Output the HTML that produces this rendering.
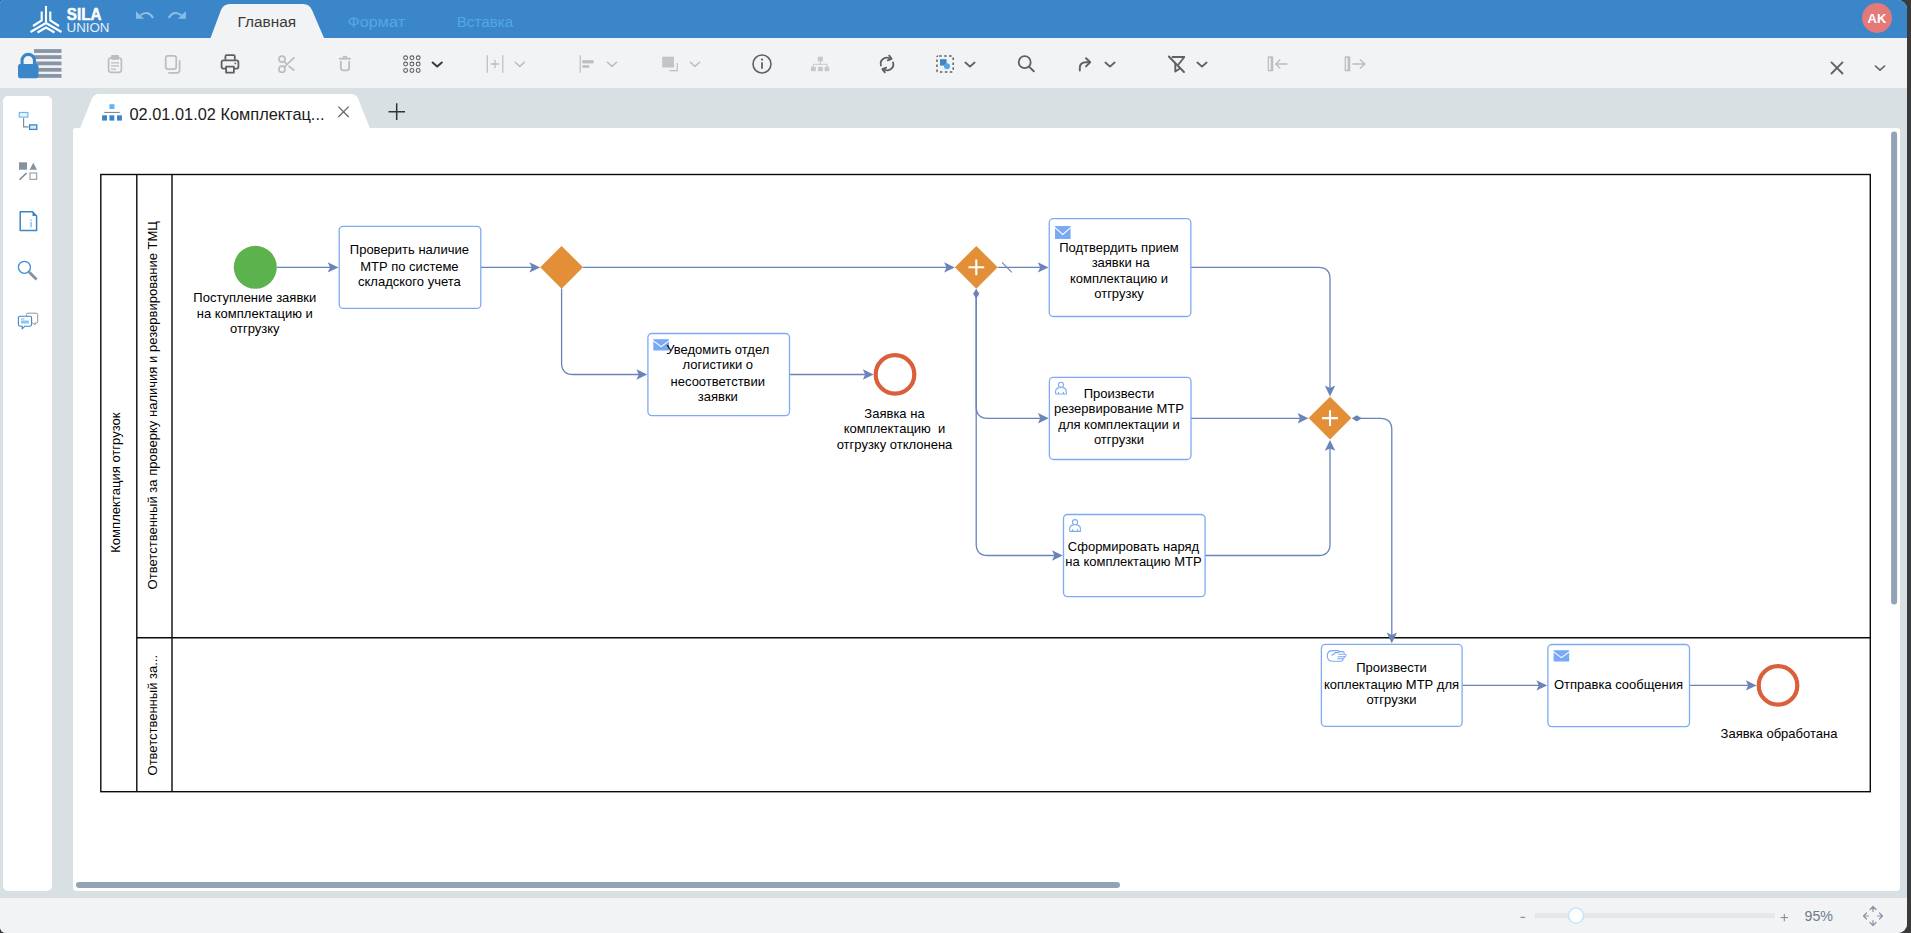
<!DOCTYPE html>
<html lang="ru">
<head>
<meta charset="utf-8">
<title>SILA Union</title>
<style>
html,body{margin:0;padding:0;}
body{width:1911px;height:933px;overflow:hidden;background:#3a3a3a;font-family:"Liberation Sans",sans-serif;position:relative;}
#app{position:absolute;left:0;top:0;width:1907px;height:933px;background:#d9e0e4;border-radius:3px 9px 9px 6px;overflow:hidden;}
#topbar{position:absolute;left:0;top:0;width:1907px;height:38px;background:#3b86c8;}
#toolbar{position:absolute;left:0;top:38px;width:1907px;height:50px;background:#f2f3f5;}
#statusbar{position:absolute;left:0;top:898px;width:1907px;height:35px;background:#f2f3f5;}
#sidebar{position:absolute;left:3px;top:96px;width:49px;height:795px;background:#fff;border-radius:5px;}
#canvas{position:absolute;left:73px;top:128px;width:1827px;height:763px;background:#fff;border-radius:3px 3px 4px 4px;}
svg{position:absolute;left:0;top:0;overflow:visible;}
svg text{font-family:"Liberation Sans",sans-serif;}
</style>
</head>
<body>
<div id="app">
<div id="topbar"></div>
<div id="toolbar"></div>
<div id="sidebar"></div>
<div id="canvas"></div>
<div id="statusbar"></div>
<svg id="chrome" width="1907" height="933" viewBox="0 0 1907 933">

<!-- ribbon active tab -->
<path d="M210.5 38 L221 10 Q223.5 4 230 4 L303 4 Q309.5 4 312 10 L324 38 Z" fill="#f2f3f5"/>
<text x="237.6" y="26.7" font-size="15.2" fill="#3a3a3a" textLength="58.5" lengthAdjust="spacingAndGlyphs">Главная</text>
<text x="347.4" y="26.9" font-size="15.2" fill="#52a7e6" textLength="57.7" lengthAdjust="spacingAndGlyphs">Формат</text>
<text x="456.7" y="26.9" font-size="15.2" fill="#52a7e6" textLength="56.5" lengthAdjust="spacingAndGlyphs">Вставка</text>
<!-- logo -->
<g stroke="#fff" stroke-width="2.1" fill="none" stroke-linecap="butt">
<path d="M46 6 V22.5"/><path d="M41.7 11.5 V20.5 L33 26"/><path d="M50.3 11.5 V20.5 L59 26"/>
<path d="M46 23 L30.5 32"/><path d="M46 23 L61.5 32"/>
<path d="M37.5 32.5 L46 27.5 L54.5 32.5"/>
</g>
<text x="66.8" y="19.9" font-size="15.6" font-weight="bold" fill="#fff" stroke="#fff" stroke-width="0.5" textLength="34.6" lengthAdjust="spacingAndGlyphs">SILA</text>
<text x="66.5" y="31.8" font-size="13" fill="#e6f0fa" textLength="43" lengthAdjust="spacingAndGlyphs">UNION</text>
<!-- undo redo -->
<g stroke="#86bee5" stroke-width="2.1" fill="none">
<path d="M140.5 15.3 Q147.5 9.5 153.2 18"/><path d="M168.6 18 Q174.3 9.5 181.3 15.3"/>
</g>
<path d="M136 11.3 L136 18.8 L144 18.8 Z" fill="#86bee5"/><path d="M185.8 11.3 L185.8 18.8 L177.8 18.8 Z" fill="#86bee5"/>
<!-- avatar -->
<circle cx="1877" cy="18" r="15" fill="#e57878"/>
<text x="1877" y="23" font-size="13" font-weight="bold" fill="#fff" text-anchor="middle">AK</text>
<rect x="34" y="49.1" width="27.5" height="3.8" fill="#8795a6"/>
<rect x="34" y="55.2" width="27.5" height="3.8" fill="#8795a6"/>
<rect x="34" y="61.5" width="27.5" height="3.8" fill="#8795a6"/>
<rect x="34" y="67.9" width="27.5" height="3.8" fill="#8795a6"/>
<rect x="34" y="74.0" width="27.5" height="3.8" fill="#8795a6"/>
<path d="M22.05 66 V60.6 A6.2 6.2 0 0 1 34.45 60.6 V66" stroke="#3b86c8" stroke-width="3.1" fill="none"/>
<rect x="18" y="64" width="20.5" height="14.3" rx="2.2" fill="#3b86c8"/>
<g stroke="#bdbdbd" fill="none" stroke-width="1.7"><rect x="108.6" y="58" width="12.8" height="14.3" rx="2.2"/><path d="M111 62.8 H119 M111 65.9 H119 M111 69.2 H116" stroke-width="1.3"/></g><rect x="111" y="55.1" width="8" height="4.7" rx="0.8" fill="#bdbdbd"/>
<g stroke="#bdbdbd" fill="none" stroke-width="1.7"><rect x="165.7" y="55.9" width="10.5" height="13.3" rx="2.2"/><path d="M168.3 72.8 H177 Q179.6 72.8 179.6 70.2 V60.2"/></g>
<g stroke="#606060" fill="none" stroke-width="1.8" stroke-linejoin="round"><path d="M225.4 59.8 V56.4 Q225.4 55.2 226.6 55.2 H233.6 Q234.8 55.2 234.8 56.4 V59.8"/><path d="M226 68.6 H223.4 Q221.6 68.6 221.6 66.8 V62.2 Q221.6 60.4 223.4 60.4 H236.6 Q238.4 60.4 238.4 62.2 V66.8 Q238.4 68.6 236.6 68.6 H234"/><rect x="226.1" y="66.7" width="7.8" height="6"/></g><circle cx="235.3" cy="63.3" r="0.9" fill="#606060"/>
<g stroke="#bdbdbd" fill="none" stroke-width="1.7"><circle cx="282" cy="59.1" r="3.05"/><circle cx="282" cy="69.2" r="3.05"/><path d="M284.3 67 L294.4 57.4 M284.3 61.4 L286.8 64.2 M288.6 66 L294.4 70.5" stroke-linecap="butt"/></g>
<g stroke="#bdbdbd" fill="none" stroke-width="1.8"><path d="M339 58.7 H350.8"/><path d="M342.8 57.6 Q345 55.6 347.2 57.6" stroke-width="1.6"/><path d="M340.8 61 V67.6 Q340.8 70.4 343.4 70.4 H346.6 Q349.2 70.4 349.2 67.6 V61"/></g>
<circle cx="405.6" cy="57.8" r="1.95" stroke="#606060" stroke-width="1.05" fill="none"/><circle cx="405.6" cy="64.1" r="1.95" stroke="#606060" stroke-width="1.05" fill="none"/><circle cx="405.6" cy="70.4" r="1.95" stroke="#606060" stroke-width="1.05" fill="none"/><circle cx="411.9" cy="57.8" r="1.95" stroke="#606060" stroke-width="1.05" fill="none"/><circle cx="411.9" cy="64.1" r="1.95" stroke="#606060" stroke-width="1.05" fill="none"/><circle cx="411.9" cy="70.4" r="1.95" stroke="#606060" stroke-width="1.05" fill="none"/><circle cx="418.2" cy="57.8" r="1.95" stroke="#606060" stroke-width="1.05" fill="none"/><circle cx="418.2" cy="64.1" r="1.95" stroke="#606060" stroke-width="1.05" fill="none"/><circle cx="418.2" cy="70.4" r="1.95" stroke="#606060" stroke-width="1.05" fill="none"/>
<path d="M432.6 62.5 L437.2 66.6 L441.8 62.5" stroke="#3a3a3a" stroke-width="2" fill="none" stroke-linecap="round" stroke-linejoin="round"/>
<g stroke="#bdbdbd" stroke-width="1.2" fill="none"><path d="M487.3 55.2 V72.8 M502.8 55.2 V72.8"/><path d="M490.8 64 H499.2 M495 59.8 V68.2" stroke-width="1.3"/></g>
<path d="M515.2 62.3 L519.8 66.4 L524.4 62.3" stroke="#bdbdbd" stroke-width="1.5" fill="none" stroke-linecap="round" stroke-linejoin="round"/>
<path d="M580.2 55.2 V72.8" stroke="#bdbdbd" stroke-width="1.2"/><rect x="582.3" y="60.2" width="11.3" height="3.2" fill="#bdbdbd"/><rect x="582.3" y="65.2" width="7" height="2.6" fill="#bdbdbd"/>
<path d="M607.4 62.3 L612.0 66.4 L616.6 62.3" stroke="#bdbdbd" stroke-width="1.5" fill="none" stroke-linecap="round" stroke-linejoin="round"/>
<rect x="662.2" y="56.7" width="11.8" height="10.8" fill="#c4c4c4"/><path d="M669.5 70.6 H677.3 V63" stroke="#bdbdbd" stroke-width="1.1" fill="none"/>
<path d="M690.4 62.3 L695.0 66.4 L699.6 62.3" stroke="#bdbdbd" stroke-width="1.5" fill="none" stroke-linecap="round" stroke-linejoin="round"/>
<circle cx="762" cy="64" r="9" stroke="#606060" stroke-width="1.6" fill="none"/><rect x="761.1" y="62.3" width="1.8" height="6.5" fill="#606060"/><circle cx="762" cy="59.6" r="1.1" fill="#606060"/>
<g fill="#c8c8c8"><rect x="817.8" y="56.7" width="5" height="4.6"/><rect x="811" y="66.8" width="4.8" height="4.4"/><rect x="818" y="66.8" width="4.8" height="4.4"/><rect x="824.6" y="66.8" width="4.6" height="4.4"/></g><path d="M820.3 61 V64.3 M813.3 67 V64.3 H827 V67" stroke="#c8c8c8" stroke-width="1" fill="none"/>
<g stroke="#606060" stroke-width="1.8" fill="none" stroke-linecap="round" stroke-linejoin="round"><path d="M880.9 65.6 A6.2 6.2 0 0 1 890.6 59"/><path d="M889.2 55.6 L891.6 58.9 L887.8 60.4"/><path d="M893.1 62.4 A6.2 6.2 0 0 1 883.4 69"/><path d="M884.8 72.4 L882.4 69.1 L886.2 67.6"/></g>
<rect x="937" y="56" width="16.2" height="16" rx="1" stroke="#606060" stroke-width="1.5" stroke-dasharray="2.5 2.45" stroke-dashoffset="-1.2" fill="none"/><rect x="940" y="59.2" width="6.6" height="6.4" fill="#3b86c8"/><circle cx="947" cy="66.2" r="3" fill="#52a7e6"/>
<path d="M965.4 62.5 L970.0 66.6 L974.6 62.5" stroke="#606060" stroke-width="1.8" fill="none" stroke-linecap="round" stroke-linejoin="round"/>
<circle cx="1024.7" cy="62.2" r="6" stroke="#606060" stroke-width="1.8" fill="none"/><path d="M1029 66.6 L1033.8 71.2" stroke="#606060" stroke-width="2" stroke-linecap="round"/>
<g stroke="#606060" stroke-width="1.9" fill="none" stroke-linecap="round" stroke-linejoin="round"><path d="M1079.8 70.5 V68 Q1079.8 62.3 1086 62.3 H1089.5"/><path d="M1086 58.2 L1090.2 62.3 L1086 66.4"/></g>
<path d="M1105.4 62.5 L1110.0 66.6 L1114.6 62.5" stroke="#606060" stroke-width="1.8" fill="none" stroke-linecap="round" stroke-linejoin="round"/>
<g stroke="#606060" stroke-width="1.9" fill="none" stroke-linecap="round" stroke-linejoin="round"><path d="M1172.5 57 H1184.3 L1178.5 64.5 M1175.3 63.5 V71.5 L1179.5 68.8 V67.5"/><path d="M1168.8 56.5 L1184 72"/></g>
<path d="M1197.4 62.5 L1202.0 66.6 L1206.6 62.5" stroke="#606060" stroke-width="1.8" fill="none" stroke-linecap="round" stroke-linejoin="round"/>
<g stroke="#bdbdbd" stroke-width="1.3" fill="none"><rect x="1268.3" y="57.2" width="3" height="13.2"/><path d="M1268.3 57.2 H1272.6 V70.6 H1268.3" /><path d="M1275.5 64 H1287.5 M1280.3 59.6 L1275.8 64 L1280.3 68.4" stroke-width="1.4"/></g>
<g stroke="#bdbdbd" stroke-width="1.3" fill="none"><rect x="1345.3" y="57.2" width="3" height="13.2"/><path d="M1345.3 57.2 H1349.6 V70.6 H1345.3" /><path d="M1352.5 64 H1364.8 M1360 59.6 L1364.8 64 L1360 68.4" stroke-width="1.4"/></g>
<path d="M1831 61.8 L1843 74 M1843 61.8 L1831 74" stroke="#606060" stroke-width="1.8" fill="none"/>
<path d="M1875.4 66.0 L1880.0 70.1 L1884.6 66.0" stroke="#606060" stroke-width="1.6" fill="none" stroke-linecap="round" stroke-linejoin="round"/>
<path d="M80 128.5 L92 98.5 Q94 94 99 94 L351 94 Q356 94 358 98.5 L370 128.5 Z" fill="#fff"/>
<rect x="109.4" y="104.2" width="5.1" height="4.8" fill="#64b5f4"/><rect x="104.3" y="111.9" width="15.4" height="1.1" fill="#7a8a9a"/><rect x="102.1" y="115.3" width="4.9" height="5.3" fill="#3b86c8"/><rect x="109.4" y="115.3" width="4.9" height="5.3" fill="#3b86c8"/><rect x="117" y="115.3" width="4.9" height="5.3" fill="#3b86c8"/>
<text x="129.5" y="120" font-size="16.2" fill="#1c1c1c" textLength="195" lengthAdjust="spacingAndGlyphs">02.01.01.02 Комплектац...</text>
<path d="M338.3 106.6 L348.7 117 M348.7 106.6 L338.3 117" stroke="#666" stroke-width="1.3" fill="none"/>
<path d="M388.5 111.7 H405 M396.7 103.3 V120" stroke="#333" stroke-width="1.5" fill="none"/>
<rect x="19.3" y="112.5" width="8.6" height="4.6" stroke="#6cb8f0" stroke-width="1.2" fill="#e8f4fd"/><path d="M23.6 118 V126.9 H28.5" stroke="#7a8794" stroke-width="1.1" fill="none"/><rect x="29.6" y="124.9" width="7.2" height="4.5" stroke="#3b86c8" stroke-width="1.3" fill="#dcebf8"/>
<rect x="19" y="162.3" width="8" height="7.4" fill="#8592a0"/><path d="M33.3 162.8 L37 169.7 H29.6 Z" fill="#8592a0"/><path d="M19.5 179.7 L26.6 173" stroke="#6d7986" stroke-width="1.2"/><rect x="30" y="173" width="6.6" height="6.4" stroke="#98a3ae" stroke-width="1.2" fill="none"/>
<path d="M20.2 211.8 H32.5 L36.6 216 V230.4 H20.2 Z" stroke="#3b86c8" stroke-width="1.5" fill="none" stroke-linejoin="round"/><path d="M32.5 211.8 V216 H36.6 Z" fill="#3b86c8"/><rect x="30.4" y="222" width="1.3" height="5.2" fill="#6cb8f0"/><rect x="30.4" y="219.6" width="1.3" height="1.4" fill="#6cb8f0"/>
<circle cx="24.4" cy="267.3" r="6" stroke="#3b8ed6" stroke-width="1.3" fill="none"/><path d="M28.8 271.7 L36.6 279.4" stroke="#8592a0" stroke-width="2.8"/>
<path d="M26.5 315.8 V314.6 Q26.5 313.2 28 313.2 H36.2 Q37.7 313.2 37.7 314.6 V321.5 Q37.7 323 36.2 323 H35 V325 L33 323 H32.3" stroke="#8a96a3" stroke-width="1" fill="none"/><path d="M20 316.3 H30 Q31.6 316.3 31.6 317.9 V324.6 Q31.6 326.2 30 326.2 H25 L22.3 328.8 V326.2 H20 Q18.4 326.2 18.4 324.6 V317.9 Q18.4 316.3 20 316.3 Z" stroke="#3b86c8" stroke-width="1.1" fill="#fff"/><path d="M21 319 H24.5" stroke="#6cb8f0" stroke-width="1"/><rect x="21" y="320.5" width="7.8" height="3" fill="#8cc4ee"/>
<rect x="76" y="882" width="1044" height="6" rx="3" fill="#93a3b5"/>
<rect x="1891.1" y="131.5" width="6" height="473" rx="3" fill="#93a3b5"/>
<rect x="1520.5" y="916.8" width="4.6" height="1.1" fill="#7a8795"/>
<rect x="1535" y="913" width="240" height="5.2" fill="#e6e7e9"/>
<circle cx="1576" cy="915.6" r="7.6" fill="#fff" stroke="#c4e6f8" stroke-width="1.6"/>
<path d="M1780.6 917.6 H1788 M1784.3 913.9 V921.3" stroke="#7a8795" stroke-width="1" fill="none"/>
<text x="1804.5" y="921.2" font-size="15" fill="#6f7c8a" textLength="28.5" lengthAdjust="spacingAndGlyphs">95%</text>
<g stroke="#8795a6" stroke-width="1.2" fill="none" stroke-linecap="round" stroke-linejoin="round"><path d="M1873 906.5 V911.5 M1870 909.5 L1873 906.5 L1876 909.5"/><path d="M1873 925.5 V920.5 M1870 922.5 L1873 925.5 L1876 922.5"/><path d="M1863.5 916 H1868.5 M1866.5 913 L1863.5 916 L1866.5 919"/><path d="M1882.5 916 H1877.5 M1879.5 913 L1882.5 916 L1879.5 919"/></g>

</svg>
<svg id="diagram" width="1907" height="933" viewBox="0 0 1907 933">
<g stroke="#0a0a0a" stroke-width="1.4" fill="none"><rect x="100.8" y="174.5" width="1769.5" height="617.2"/><path d="M136.8 174.5 V791.7 M172 174.5 V791.7 M136.8 637.7 H1870.3"/></g>
<text transform="translate(120.3 482.6) rotate(-90)" x="-70.15" font-size="13" fill="#000" textLength="140.3" lengthAdjust="spacing">Комплектация отгрузок</text>
<text transform="translate(156.5 405.2) rotate(-90)" x="-184.2" font-size="13" fill="#000" textLength="368.4" lengthAdjust="spacing">Ответственный за проверку наличия и резервирование ТМЦ</text>
<text transform="translate(156.5 715.2) rotate(-90)" x="-60.3" font-size="13" fill="#000" textLength="120.6" lengthAdjust="spacing">Ответственный за...</text>
<path d="M276.8 267.4 H331" stroke="#6a83b9" stroke-width="1.3" fill="none"/><path transform="translate(338.5 267.4) rotate(0)" d="M0 0 L-10.8 -5.2 L-8.4 0 L-10.8 5.2 Z" fill="#6a83b9" stroke="none"/>
<path d="M480.8 267.4 H532" stroke="#6a83b9" stroke-width="1.3" fill="none"/><path transform="translate(540.2 267.4) rotate(0)" d="M0 0 L-10.8 -5.2 L-8.4 0 L-10.8 5.2 Z" fill="#6a83b9" stroke="none"/>
<path d="M583 267.4 H947" stroke="#6a83b9" stroke-width="1.3" fill="none"/><path transform="translate(954.9 267.4) rotate(0)" d="M0 0 L-10.8 -5.2 L-8.4 0 L-10.8 5.2 Z" fill="#6a83b9" stroke="none"/>
<path d="M561.6 288.6 V363.0 Q561.6 374.5 573.1 374.5 H640" stroke="#6a83b9" stroke-width="1.3" fill="none"/><path transform="translate(647.2 374.5) rotate(0)" d="M0 0 L-10.8 -5.2 L-8.4 0 L-10.8 5.2 Z" fill="#6a83b9" stroke="none"/>
<path d="M789.5 374.5 H866" stroke="#6a83b9" stroke-width="1.3" fill="none"/><path transform="translate(873.6 374.5) rotate(0)" d="M0 0 L-10.8 -5.2 L-8.4 0 L-10.8 5.2 Z" fill="#6a83b9" stroke="none"/>
<path d="M997.7 267.4 H1041" stroke="#6a83b9" stroke-width="1.3" fill="none"/><path transform="translate(1048.6 267.4) rotate(0)" d="M0 0 L-10.8 -5.2 L-8.4 0 L-10.8 5.2 Z" fill="#6a83b9" stroke="none"/>
<path d="M1002 262.3 L1011.8 272.4" stroke="#6a83b9" stroke-width="1.1"/>
<path d="M1190.9 267.4 H1318.5 Q1330 267.4 1330 278.9 V389" stroke="#6a83b9" stroke-width="1.3" fill="none"/><path transform="translate(1330 396.4) rotate(90)" d="M0 0 L-10.8 -5.2 L-8.4 0 L-10.8 5.2 Z" fill="#6a83b9" stroke="none"/>
<path transform="translate(976.2 288.8) rotate(90)" d="M0 0 L5 -3.1 L10 0 L5 3.1 Z" fill="#6a83b9"/><path d="M976.2 297 V406.8 Q976.2 418.3 987.7 418.3 H1041" stroke="#6a83b9" stroke-width="1.3" fill="none"/><path transform="translate(1048.7 418.3) rotate(0)" d="M0 0 L-10.8 -5.2 L-8.4 0 L-10.8 5.2 Z" fill="#6a83b9" stroke="none"/>
<path d="M976.2 297 V544.0 Q976.2 555.5 987.7 555.5 H1055" stroke="#6a83b9" stroke-width="1.3" fill="none"/><path transform="translate(1062.8 555.5) rotate(0)" d="M0 0 L-10.8 -5.2 L-8.4 0 L-10.8 5.2 Z" fill="#6a83b9" stroke="none"/>
<path d="M1191 418.3 H1301" stroke="#6a83b9" stroke-width="1.3" fill="none"/><path transform="translate(1308.4 418.3) rotate(0)" d="M0 0 L-10.8 -5.2 L-8.4 0 L-10.8 5.2 Z" fill="#6a83b9" stroke="none"/>
<path d="M1205.1 555.5 H1318.5 Q1330 555.5 1330 544.0 V448" stroke="#6a83b9" stroke-width="1.3" fill="none"/><path transform="translate(1330 440) rotate(-90)" d="M0 0 L-10.8 -5.2 L-8.4 0 L-10.8 5.2 Z" fill="#6a83b9" stroke="none"/>
<path transform="translate(1351.8 418.3) rotate(0)" d="M0 0 L5 -3.1 L10 0 L5 3.1 Z" fill="#6a83b9"/><path d="M1360 418.3 H1380.3 Q1391.8 418.3 1391.8 429.8 V635" stroke="#6a83b9" stroke-width="1.3" fill="none"/><path transform="translate(1391.8 643.3) rotate(90)" d="M0 0 L-10.8 -5.2 L-8.4 0 L-10.8 5.2 Z" fill="#6a83b9" stroke="none"/>
<path d="M1462.2 685.4 H1540" stroke="#6a83b9" stroke-width="1.3" fill="none"/><path transform="translate(1547.2 685.4) rotate(0)" d="M0 0 L-10.8 -5.2 L-8.4 0 L-10.8 5.2 Z" fill="#6a83b9" stroke="none"/>
<path d="M1689.5 685.4 H1749" stroke="#6a83b9" stroke-width="1.3" fill="none"/><path transform="translate(1756.6 685.4) rotate(0)" d="M0 0 L-10.8 -5.2 L-8.4 0 L-10.8 5.2 Z" fill="#6a83b9" stroke="none"/>
<circle cx="255.3" cy="267.3" r="21.5" fill="#5cb24c"/>
<text x="254.8" y="301.8" font-size="13" fill="#000" text-anchor="middle" xml:space="preserve">Поступление заявки</text>
<text x="254.8" y="317.5" font-size="13" fill="#000" text-anchor="middle" xml:space="preserve">на комплектацию и</text>
<text x="254.8" y="332.7" font-size="13" fill="#000" text-anchor="middle" xml:space="preserve">отгрузку</text>
<rect x="339.2" y="226.3" width="141.6" height="82.1" rx="4" ry="4" fill="#fff" stroke="#7eaaf2" stroke-width="1.3"/>
<text x="409.4" y="253.8" font-size="13" fill="#000" text-anchor="middle" xml:space="preserve">Проверить наличие</text>
<text x="409.4" y="270.8" font-size="13" fill="#000" text-anchor="middle" xml:space="preserve">МТР по системе</text>
<text x="409.4" y="285.9" font-size="13" fill="#000" text-anchor="middle" xml:space="preserve">складского учета</text>
<path d="M540.2 267.3 L561.6 245.9 L583.0 267.3 L561.6 288.7 Z" fill="#e28f38"/>
<path d="M954.9 267.3 L976.3 245.9 L997.6999999999999 267.3 L976.3 288.7 Z" fill="#e28f38"/><path d="M968.4 267.3 H984.1999999999999 M976.3 259.40000000000003 V275.2" stroke="#fff" stroke-width="2.1" fill="none"/>
<rect x="647.9" y="333.5" width="141.6" height="82.1" rx="4" ry="4" fill="#fff" stroke="#7eaaf2" stroke-width="1.3"/>
<rect x="653.3" y="339.2" width="15.7" height="11.3" fill="#79a9f5"/><path d="M653.0 340.59999999999997 L661.15 346.6015 L669.3 340.59999999999997" stroke="#fff" stroke-width="1.1" fill="none"/>
<text x="717.8" y="353.5" font-size="13" fill="#000" text-anchor="middle" xml:space="preserve">Уведомить отдел</text>
<text x="717.8" y="369.2" font-size="13" fill="#000" text-anchor="middle" xml:space="preserve">логистики о</text>
<text x="717.8" y="386" font-size="13" fill="#000" text-anchor="middle" xml:space="preserve">несоответствии</text>
<text x="717.8" y="401" font-size="13" fill="#000" text-anchor="middle" xml:space="preserve">заявки</text>
<circle cx="895" cy="374.4" r="19.3" fill="#fff" stroke="#d9603a" stroke-width="4.2"/>
<text x="894.5" y="417.5" font-size="13" fill="#000" text-anchor="middle" xml:space="preserve">Заявка на</text>
<text x="894.5" y="433" font-size="13" fill="#000" text-anchor="middle" xml:space="preserve">комплектацию  и</text>
<text x="894.5" y="448.5" font-size="13" fill="#000" text-anchor="middle" xml:space="preserve">отгрузку отклонена</text>
<rect x="1049.25" y="218.7" width="141.6" height="97.8" rx="4" ry="4" fill="#fff" stroke="#7eaaf2" stroke-width="1.3"/>
<rect x="1055" y="226.05" width="15.6" height="12.9" fill="#79a9f5"/><path d="M1054.7 227.45000000000002 L1062.8 234.4995 L1070.8999999999999 227.45000000000002" stroke="#fff" stroke-width="1.1" fill="none"/>
<text x="1119" y="251.7" font-size="13" fill="#000" text-anchor="middle" xml:space="preserve">Подтвердить прием</text>
<text x="1120.7" y="267.3" font-size="13" fill="#000" text-anchor="middle" xml:space="preserve">заявки на</text>
<text x="1119" y="282.8" font-size="13" fill="#000" text-anchor="middle" xml:space="preserve">комплектацию и</text>
<text x="1119" y="298.3" font-size="13" fill="#000" text-anchor="middle" xml:space="preserve">отгрузку</text>
<rect x="1049.4" y="377.4" width="141.6" height="82.1" rx="4" ry="4" fill="#fff" stroke="#7eaaf2" stroke-width="1.3"/>
<g stroke="#7eaaf2" stroke-width="1.1" fill="none" transform="translate(1049.4 377.3)"><circle cx="11.55" cy="7.55" r="2.55"/><path d="M6.2 16.75 V13.9 C6.2 11.3 8 10.7 9.9 10.3 M13.2 10.3 C15.1 10.7 16.9 11.3 16.9 13.9 V16.75 H6.2"/><path d="M9.1 16.75 V14.6 M14 16.75 V14.6"/></g>
<text x="1119" y="397.7" font-size="13" fill="#000" text-anchor="middle" xml:space="preserve">Произвести</text>
<text x="1119" y="413.2" font-size="13" fill="#000" text-anchor="middle" xml:space="preserve">резервирование МТР</text>
<text x="1119" y="428.7" font-size="13" fill="#000" text-anchor="middle" xml:space="preserve">для комплектации и</text>
<text x="1119" y="444.2" font-size="13" fill="#000" text-anchor="middle" xml:space="preserve">отгрузки</text>
<path d="M1308.6 418.1 L1330 396.70000000000005 L1351.4 418.1 L1330 439.5 Z" fill="#e28f38"/><path d="M1322.1 418.1 H1337.9 M1330 410.20000000000005 V426.0" stroke="#fff" stroke-width="2.1" fill="none"/>
<rect x="1063.5" y="514.5" width="141.6" height="82.1" rx="4" ry="4" fill="#fff" stroke="#7eaaf2" stroke-width="1.3"/>
<g stroke="#7eaaf2" stroke-width="1.1" fill="none" transform="translate(1063.5 514.6)"><circle cx="11.55" cy="7.55" r="2.55"/><path d="M6.2 16.75 V13.9 C6.2 11.3 8 10.7 9.9 10.3 M13.2 10.3 C15.1 10.7 16.9 11.3 16.9 13.9 V16.75 H6.2"/><path d="M9.1 16.75 V14.6 M14 16.75 V14.6"/></g>
<text x="1133.5" y="550.8" font-size="13" fill="#000" text-anchor="middle" xml:space="preserve">Сформировать наряд</text>
<text x="1133.5" y="566.3" font-size="13" fill="#000" text-anchor="middle" xml:space="preserve">на комплектацию МТР</text>
<rect x="1321.4" y="644.3" width="140.7" height="82.1" rx="4" ry="4" fill="#fff" stroke="#7eaaf2" stroke-width="1.3"/>
<g stroke="#7eaaf2" stroke-width="1.1" fill="none" stroke-linecap="round" transform="translate(1321.4 644.3)"><path d="M10.1 6.3 H16.4 Q17.9 6.3 17.9 7.3 Q17.9 8.3 16.4 8.3 H13.6 L12.4 9.7 L10.4 10.9"/><path d="M10.1 6.3 Q5.9 6.9 5.9 11.6 Q5.9 16.3 10.4 17 H19.6 Q21.4 17 21.6 14.5"/><path d="M17.9 7.3 H21.6 Q22.9 7.6 22.8 8.9"/><path d="M17.4 10 H23.2 Q24.6 10.1 24.6 11.2 Q24.6 12.3 23.2 12.4 H16.5"/><path d="M22.8 12.4 Q23.1 14.5 21.6 14.5 H16.2"/></g>
<text x="1391.5" y="672.3" font-size="13" fill="#000" text-anchor="middle" xml:space="preserve">Произвести</text>
<text x="1391.5" y="689" font-size="13" fill="#000" text-anchor="middle" xml:space="preserve">коплектацию МТР для</text>
<text x="1391.5" y="704.3" font-size="13" fill="#000" text-anchor="middle" xml:space="preserve">отгрузки</text>
<rect x="1547.9" y="644.5" width="141.6" height="82.1" rx="4" ry="4" fill="#fff" stroke="#7eaaf2" stroke-width="1.3"/>
<rect x="1553.6" y="650.2" width="15.6" height="11.3" fill="#79a9f5"/><path d="M1553.3 651.6 L1561.3999999999999 657.6015000000001 L1569.4999999999998 651.6" stroke="#fff" stroke-width="1.1" fill="none"/>
<text x="1618.5" y="689.3" font-size="13" fill="#000" text-anchor="middle" xml:space="preserve">Отправка сообщения</text>
<circle cx="1778" cy="685.4" r="19.3" fill="#fff" stroke="#d9603a" stroke-width="4.2"/>
<text x="1779" y="737.7" font-size="13" fill="#000" text-anchor="middle" xml:space="preserve">Заявка обработана</text>

</svg>
</div>
</body>
</html>
